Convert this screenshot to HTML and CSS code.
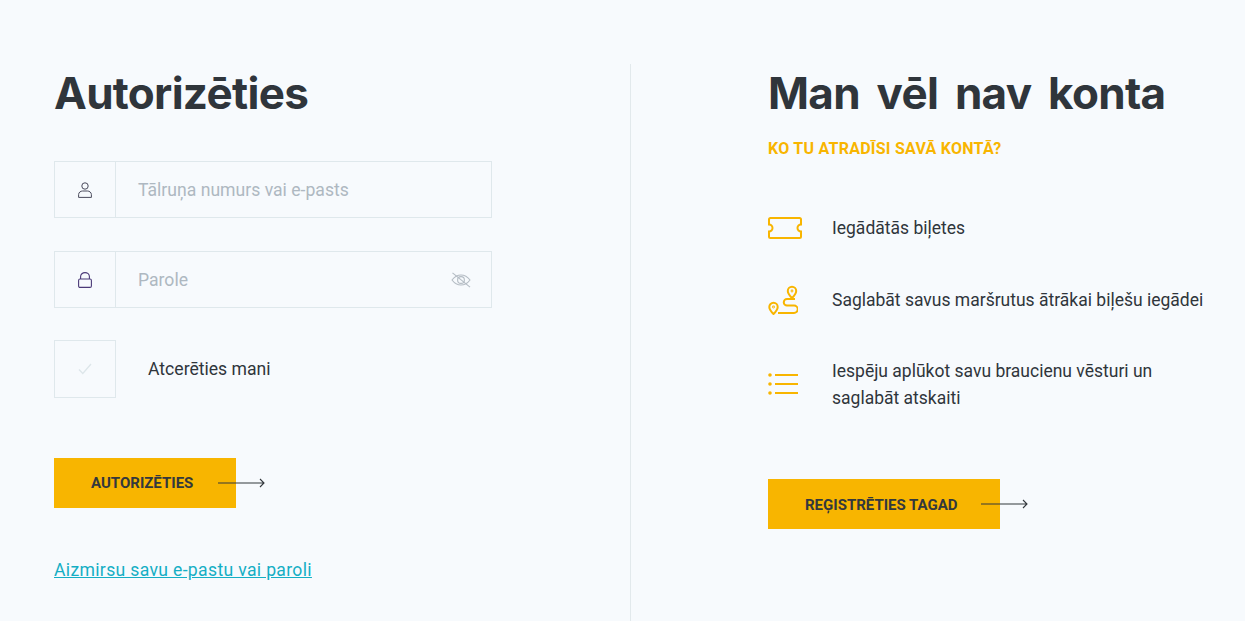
FILE: index.html
```html
<!DOCTYPE html>
<html lang="lv">
<head>
  <meta charset="UTF-8" />
  <meta name="viewport" content="width=device-width, initial-scale=1.0" />
  <title>Autorizēties</title>
  <link rel="stylesheet" href="styles.css">
</head>
<body>

<main class="auth">
  <section class="login">
    <h1>Autorizēties</h1>

    <form class="login-form">
      <div class="field">
        <span class="field-icon">
          <svg width="14" height="16" viewBox="0 0 14 16" fill="none" stroke="#4a4a5c" stroke-width="1">
            <circle cx="7" cy="4" r="3.2"/>
            <path d="M.6 15.400V12.600C.6 10.400 2.600 9 4.600 9h4.800c2 0 4 1.400 4 3.600v2.800z"/>
          </svg>
        </span>
        <span class="field-text">Tālruņa numurs vai e-pasts</span>
      </div>

      <div class="field">
        <span class="field-icon">
          <svg width="14" height="16" viewBox="0 0 14 16" fill="none" stroke="#4b3a78" stroke-width="1.1">
            <rect x=".6" y="7" width="12.800" height="8.400" rx="1.400"/>
            <path d="M2.600 7V4.600a4.400 4 0 0 1 8.800 0V7"/>
          </svg>
        </span>
        <span class="field-text">Parole</span>
        <svg class="eye" width="20" height="16" viewBox="0 0 20 16" fill="none" stroke="#b4bcc4" stroke-width="1.100">
          <path d="M1 8c2.400-3.200 5.400-5 9-5s6.600 1.800 9 5c-2.400 3.200-5.400 5-9 5s-6.600-1.800-9-5z"/>
          <circle cx="10" cy="8" r="3.400"/>
          <path d="M1.500 .8l17.500 14.400"/>
        </svg>
      </div>

      <label class="remember">
        <span class="checkbox">
          <svg width="14" height="12" viewBox="0 0 14 12" fill="none" stroke="#dde6ea" stroke-width="1.300">
            <path d="M1 6.500l3.800 4L13 1"/>
          </svg>
        </span>
        <span class="remember-text">Atcerēties mani</span>
      </label>

      <a class="btn btn-login" href="#">Autorizēties
        <svg class="arrow" width="47" height="10" viewBox="0 0 47 10" fill="none" stroke="#33383d" stroke-width="1.100">
          <path d="M0 5h46M42 1l4 4-4 4"/>
        </svg>
      </a>
    </form>

    <a class="forgot" href="#">Aizmirsu savu e-pastu vai paroli</a>
  </section>

  <section class="register">
    <h1>Man vēl nav konta</h1>
    <h2>Ko tu atradīsi savā kontā?</h2>

    <ul class="perks">
      <li class="perk-ticket">
        <svg width="34" height="22" viewBox="0 0 34 22" fill="none" stroke="#f8b500" stroke-width="2">
          <path d="M2.500 1h29A1.500 1.500 0 0 1 33 2.500V7.500a3.500 3.500 0 0 0 0 7v5a1.500 1.500 0 0 1-1.500 1.500h-29A1.500 1.500 0 0 1 1 19.500v-5a3.500 3.500 0 0 0 0-7V2.500A1.500 1.500 0 0 1 2.500 1z"/>
        </svg>
        <span>Iegādātās biļetes</span>
      </li>
      <li class="perk-route">
        <svg width="30" height="30" viewBox="0 0 30 30" fill="none" stroke="#f8b500" stroke-width="2">
          <path d="M24 13c-2.800-2.800-4.200-4.800-4.200-7a4.200 4.200 0 0 1 8.400 0c0 2.200-1.400 4.200-4.200 7z"/>
          <path d="M5.500 29c-2.800-2.800-4.200-4.800-4.200-7a4.200 4.200 0 0 1 8.400 0c0 2.200-1.400 4.200-4.200 7z"/>
          <path d="M27 14h-8a3.250 3.250 0 0 0 0 6.500h7a3.750 3.750 0 0 1 0 7.500H10"/>
          <circle cx="24" cy="6" r=".4"/>
          <circle cx="5.500" cy="22" r=".4"/>
        </svg>
        <span>Saglabāt savus maršrutus ātrākai biļešu iegādei</span>
      </li>
      <li class="perk-list">
        <svg width="31" height="22" viewBox="0 0 31 22" fill="none" stroke="#f8b500" stroke-width="1.800">
          <path d="M7 2h23M7 11h23M7 20h23"/>
          <circle cx="2" cy="2" r=".9"/>
          <circle cx="2" cy="11" r=".9"/>
          <circle cx="2" cy="20" r=".9"/>
        </svg>
        <span>Iespēju aplūkot savu braucienu vēsturi un saglabāt atskaiti</span>
      </li>
    </ul>

    <a class="btn btn-register" href="#">Reģistrēties tagad
      <svg class="arrow" width="47" height="10" viewBox="0 0 47 10" fill="none" stroke="#33383d" stroke-width="1.100">
        <path d="M0 5h46M42 1l4 4-4 4"/>
      </svg>
    </a>
  </section>
</main>

</body>
</html>
```

FILE: styles.css
```css
html, body {
  margin: 0;
  padding: 0;
}

body {
  font-family: Roboto, 'Liberation Sans', sans-serif;
  background: #f7fafd;
  color: #2f353b;
  height: 621px;
  overflow: hidden;
}

a {
  text-decoration: none;
}

.auth {
  display: flex;
  padding-top: 64px;
  height: 557px;
}

.login {
  width: 576px;
  padding-left: 54px;
  border-right: 1px solid #e2e9ec;
}

.register {
  padding-left: 137px;
}

h1 {
  font-family: Inter, Lato, sans-serif;
  font-weight: 700;
  font-size: 44px;
  line-height: 58px;
  letter-spacing: -.7px;
  margin: 0;
  color: #2f353b;
  font-variant-ligatures: none;
  height: 60px;
}

.register h1 {
  word-spacing: 7px;
}

h2 {
  font-size: 16px;
  line-height: 24px;
  font-weight: 700;
  text-transform: uppercase;
  color: #f8b500;
  margin: 13px 0 0;
  letter-spacing: .25px;
}

.login-form {
  margin-top: 37px;
}

.field {
  display: flex;
  align-items: center;
  width: 436px;
  height: 55px;
  border: 1px solid #dfe8ec;
}

.field + .field {
  margin-top: 33px;
}

.field-icon {
  width: 60px;
  height: 100%;
  border-right: 1px solid #dfe8ec;
  display: flex;
  align-items: center;
  justify-content: center;
}

.field-text {
  flex: 1;
  padding-left: 22px;
  font-size: 17.6px;
  color: #aeb8c1;
}

.eye {
  margin-right: 20px;
}

.remember {
  display: flex;
  align-items: center;
  gap: 32px;
  font-size: 17.6px;
  margin-top: 32px;
}

.remember-text {
  margin-bottom: 1px;
}

.checkbox {
  width: 60px;
  height: 56px;
  border: 1px solid #dfe8ec;
  display: flex;
  align-items: center;
  justify-content: center;
}

.btn {
  display: flex;
  align-items: center;
  position: relative;
  height: 50px;
  padding-left: 37px;
  box-sizing: border-box;
  background: #f8b500;
  color: #33383d;
  font-size: 15px;
  font-weight: 700;
  text-transform: uppercase;
}

.arrow {
  position: absolute;
  top: 20px;
}

.btn-login {
  width: 182px;
  margin-top: 60px;
}

.btn-login .arrow {
  left: 164px;
}

.btn-register {
  width: 232px;
  margin-top: 67px;
  padding-top: 2px;
}

.btn-register .arrow {
  left: 213px;
}

.forgot {
  display: inline-block;
  margin-top: 50px;
  font-size: 17.6px;
  line-height: 24px;
  color: #14aec4;
  text-decoration: underline;
  letter-spacing: .33px;
}

.perks {
  list-style: none;
  margin: 0;
  padding: 0;
}

.perks li {
  display: flex;
  align-items: center;
  font-size: 17.5px;
  line-height: 27px;
}

.perks svg {
  flex: none;
}

.perks span {
  display: block;
  max-width: 380px;
}

.perk-ticket {
  margin-top: 52px;
  gap: 30px;
}

.perk-route {
  margin-top: 43px;
  gap: 34px;
}

.perk-list {
  margin-top: 41px;
  gap: 33px;
}

.perk-ticket span,
.perk-list span {
  padding-top: 2px;
}
```
